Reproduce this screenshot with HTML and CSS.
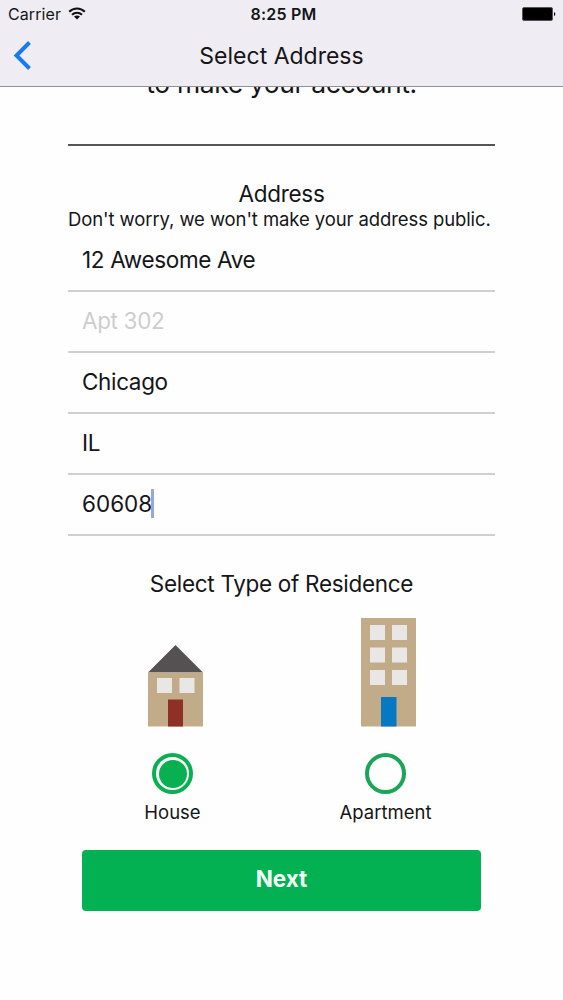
FILE: index.html
```html
<!DOCTYPE html>
<html lang="en">

<head>
  <meta charset="UTF-8">
  <meta name="viewport" content="width=device-width, initial-scale=1.0">
  <title>Select Address</title>
  <link rel="stylesheet" href="styles.css">
</head>

<body>
  <header class="header">
    <div class="status-bar">
      <div class="carrier">
        <span class="carrier-name">Carrier</span>
        <svg class="wifi" width="18" height="14" viewBox="0 0 18 14">
          <path d="M1.2 4.7 C5.6 .4 12.4 .4 16.8 4.7" fill="none" stroke="#111" stroke-width="2.1"/>
          <path d="M4 7.7 C6.9 5 11.1 5 14 7.7" fill="none" stroke="#111" stroke-width="2.1"/>
          <path d="M6 9.6 C7.8 8 10.2 8 12 9.6 L9 12.5 Z" fill="#111"/>
        </svg>
      </div>
      <div class="time">8:25 PM</div>
      <svg class="battery" width="34" height="14" viewBox="0 0 34 14">
        <rect x="0.5" y="0.5" width="30" height="13" rx="1.5" fill="#000" stroke="#55555a"/>
        <path d="M32 5 Q33.3 5.3 33.3 7 Q33.3 8.7 32 9 Z" fill="#000"/>
      </svg>
    </div>
    <div class="nav-bar">
      <svg class="back" width="18" height="30" viewBox="0 0 18 30">
        <path d="M16.5 1.5 L3.5 14.5 L16.5 27.5" fill="none" stroke="#187bea" stroke-width="4"/>
      </svg>
      <h1 class="title">Select Address</h1>
    </div>
  </header>

  <main class="content">
    <p class="intro">to make your account.</p>

    <h2 class="heading">Address</h2>
    <p class="note">Don't worry, we won't make your address public.</p>
    <input class="field" type="text" value="12 Awesome Ave">
    <input class="field" type="text" placeholder="Apt 302">
    <input class="field" type="text" value="Chicago">
    <input class="field" type="text" value="IL">
    <div class="field active">60608<span class="cursor"></span></div>

    <h2 class="heading residence-heading">Select Type of Residence</h2>
    <div class="residences">
      <div class="residence">
        <svg class="building" width="55" height="109" viewBox="0 0 55 109">
          <path d="M0 54.5 L27.5 27 L55 54.5 Z" fill="#555152"/>
          <rect x="0" y="54.5" width="55" height="54" fill="#c2ab88"/>
          <rect x="9" y="60" width="15" height="15" fill="#e9e7e6"/>
          <rect x="31.5" y="60" width="15" height="15" fill="#e9e7e6"/>
          <rect x="20" y="81.5" width="15" height="27" fill="#8e3026"/>
        </svg>
        <span class="radio checked"></span>
        <span class="label">House</span>
      </div>
      <div class="residence">
        <svg class="building" width="55" height="109" viewBox="0 0 55 109">
          <rect width="55" height="108.5" fill="#c2ab88"/>
          <g fill="#e9e7e6">
            <rect x="9" y="7" width="15" height="15"/>
            <rect x="31" y="7" width="15" height="15"/>
            <rect x="9" y="29.5" width="15" height="15"/>
            <rect x="31" y="29.5" width="15" height="15"/>
            <rect x="9" y="52" width="15" height="15"/>
            <rect x="31" y="52" width="15" height="15"/>
          </g>
          <rect x="20" y="79" width="15.5" height="29.5" fill="#0878c3"/>
        </svg>
        <span class="radio"></span>
        <span class="label">Apartment</span>
      </div>
    </div>

    <button class="next-button">Next</button>
  </main>
</body>

</html>
```

FILE: styles.css
```css
* {
  box-sizing: border-box;
}

body {
  margin: 0;
  height: 1000px;
  overflow: hidden;
  background-color: #fefefe;
  color: #151518;
  font-family: Inter, "Liberation Sans", sans-serif;
}

h1, h2, p {
  margin: 0;
  font-weight: 400;
}

.header {
  height: 87px;
  background-color: #efedf3;
  border-bottom: 1px solid #929196;
}

.status-bar {
  display: grid;
  grid-template-columns: 1fr auto 1fr;
  align-items: center;
  height: 28px;
  padding: 0 7px 0 8px;
}

.carrier {
  display: flex;
  align-items: center;
  gap: 7px;
}

.carrier-name {
  font-size: 16px;
  line-height: 28px;
  letter-spacing: 0.1px;
}

.time {
  padding-left: 3px;
  font-size: 16px;
  font-weight: 600;
  letter-spacing: 0.2px;
}

.battery {
  justify-self: end;
}

.nav-bar {
  display: grid;
  grid-template-columns: 1fr auto 1fr;
  align-items: center;
  height: 56px;
  padding: 0 13px;
}

.title {
  font-size: 23px;
}

.content {
  display: flex;
  flex-direction: column;
  height: 913px;
  padding: 0 68px;
  overflow: hidden;
}

/* scrolled partly under the header */
.intro {
  height: 79px;
  margin: -20px 0 33px;
  border-bottom: 2px solid #555;
  font-size: 26.5px;
  line-height: 32px;
  letter-spacing: -0.4px;
  text-align: center;
}

.heading {
  font-size: 22.5px;
  line-height: 30px;
  letter-spacing: -0.3px;
  text-align: center;
}

.note {
  height: 21.5px;
  font-size: 18.5px;
  line-height: 21px;
  letter-spacing: -0.1px;
  white-space: nowrap;
}

.field {
  display: flex;
  align-items: center;
  flex-shrink: 0;
  width: 427px;
  height: 61.1px;
  padding: 0 14px 2px;
  border: 0;
  border-bottom: 2px solid #d0d0d1;
  border-radius: 0;
  background: none;
  color: inherit;
  font: 22.5px Inter, "Liberation Sans", sans-serif;
  letter-spacing: -0.35px;
  outline: none;
}

.field::placeholder {
  color: #cdcdd0;
  opacity: 1;
}

.field.active {
  letter-spacing: 0;
}

.cursor {
  width: 3px;
  height: 29px;
  margin-left: -1px;
  background-color: #93a6e6;
}

.residence-heading {
  margin-top: 33.5px;
}

.residences {
  display: grid;
  grid-template-columns: 213px 213px;
  padding-left: 1px;
  margin-top: 19px;
}

.residence {
  display: flex;
  flex-direction: column;
  align-items: center;
}

.radio {
  width: 41px;
  height: 41px;
  margin: 26px 6px 1px 0;
  padding: 3px;
  border: 4px solid #1aa557;
  border-radius: 50%;
}

.radio.checked {
  padding: 2.5px;
  border-color: #08b052;
  border-width: 4.5px;
  background: #08b052 content-box;
}

.label {
  margin-right: 6px;
  font-size: 18.5px;
  line-height: 35px;
}

.next-button {
  height: 61px;
  margin: 20px 14px 0;
  padding: 0 0 5px;
  border: 0;
  border-radius: 4px;
  background-color: #04b152;
  color: #f2fff6;
  font: 700 22.5px Inter, "Liberation Sans", sans-serif;
}
```
